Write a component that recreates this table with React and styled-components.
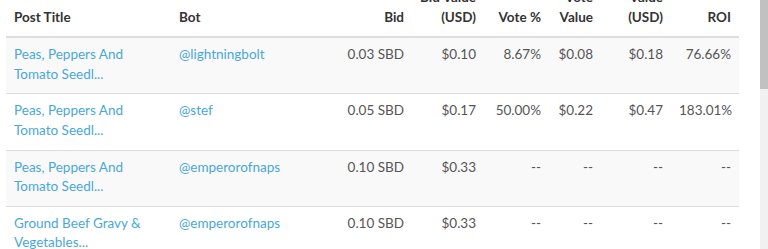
import React from 'react'
import styled, { createGlobalStyle } from 'styled-components'

const GlobalStyle = createGlobalStyle`
  html, body {
    margin: 0;
    padding: 0;
    background: #fff;
    overflow: hidden;
  }
  body {
    font-family: Lato, "Open Sans", sans-serif;
    font-size: 13.5px;
    color: #555;
  }
`

const Page = styled.div`
  display: flex;
  height: 249px;
  overflow: hidden;
`

const Main = styled.div`
  flex: 1;
  padding: 0 21px 0 6px;
  margin-top: -20px;
`

const Scrollbar = styled.div`
  width: 8px;
  background: #f1f1f1;
`

const Thumb = styled.div`
  height: 89px;
  background: #c1c1c1;
`

const Table = styled.table`
  width: 733px;
  border-collapse: collapse;
  table-layout: fixed;
  line-height: 19.6px;
`

const Th = styled.th`
  padding: 8px 8px 9px;
  text-align: ${(p) => (p.$right ? 'right' : 'left')};
  vertical-align: bottom;
  font-weight: 700;
  color: #333;
  white-space: nowrap;
  border-bottom: 2px solid #ddd;
`

const Row = styled.tr`
  background: ${(p) => (p.$striped ? '#f9f9f9' : '#fff')};
`

const Td = styled.td`
  padding: 7px 8px 9px;
  vertical-align: top;
  text-align: ${(p) => (p.$right ? 'right' : 'left')};
  border-top: 1px solid #ddd;
  color: #555;
  white-space: ${(p) => (p.$right ? 'nowrap' : 'normal')};
`

const Link = styled.a`
  color: #48a8da;
  text-decoration: none;
`

const widths = [165, 160, 81, 72, 65, 52, 70, 68]

const rows = [
  ['Peas, Peppers And Tomato Seedl...', '@lightningbolt', '0.03 SBD', '$0.10', '8.67%', '$0.08', '$0.18', '76.66%'],
  ['Peas, Peppers And Tomato Seedl...', '@stef', '0.05 SBD', '$0.17', '50.00%', '$0.22', '$0.47', '183.01%'],
  ['Peas, Peppers And Tomato Seedl...', '@emperorofnaps', '0.10 SBD', '$0.33', '--', '--', '--', '--'],
  ['Ground Beef Gravy & Vegetables...', '@emperorofnaps', '0.10 SBD', '$0.33', '--', '--', '--', '--'],
]

const App = () => (
  <>
    <GlobalStyle />
    <Page>
      <Main>
        <Table>
          <colgroup>
            {widths.map((w, i) => (
              <col key={i} style={{ width: w }} />
            ))}
          </colgroup>
          <thead>
            <tr>
              <Th>Post Title</Th>
              <Th>Bot</Th>
              <Th $right>Bid</Th>
              <Th $right>Bid Value<br />(USD)</Th>
              <Th $right>Vote %</Th>
              <Th $right>Vote<br />Value</Th>
              <Th $right>Value<br />(USD)</Th>
              <Th $right>ROI</Th>
            </tr>
          </thead>
          <tbody>
            {rows.map((r, i) => (
              <Row key={i} $striped={i % 2 === 0}>
                <Td><Link href="#">{r[0]}</Link></Td>
                <Td><Link href="#">{r[1]}</Link></Td>
                {r.slice(2).map((v, j) => (
                  <Td key={j} $right>{v}</Td>
                ))}
              </Row>
            ))}
          </tbody>
        </Table>
      </Main>
      <Scrollbar>
        <Thumb />
      </Scrollbar>
    </Page>
  </>
)

export default App
